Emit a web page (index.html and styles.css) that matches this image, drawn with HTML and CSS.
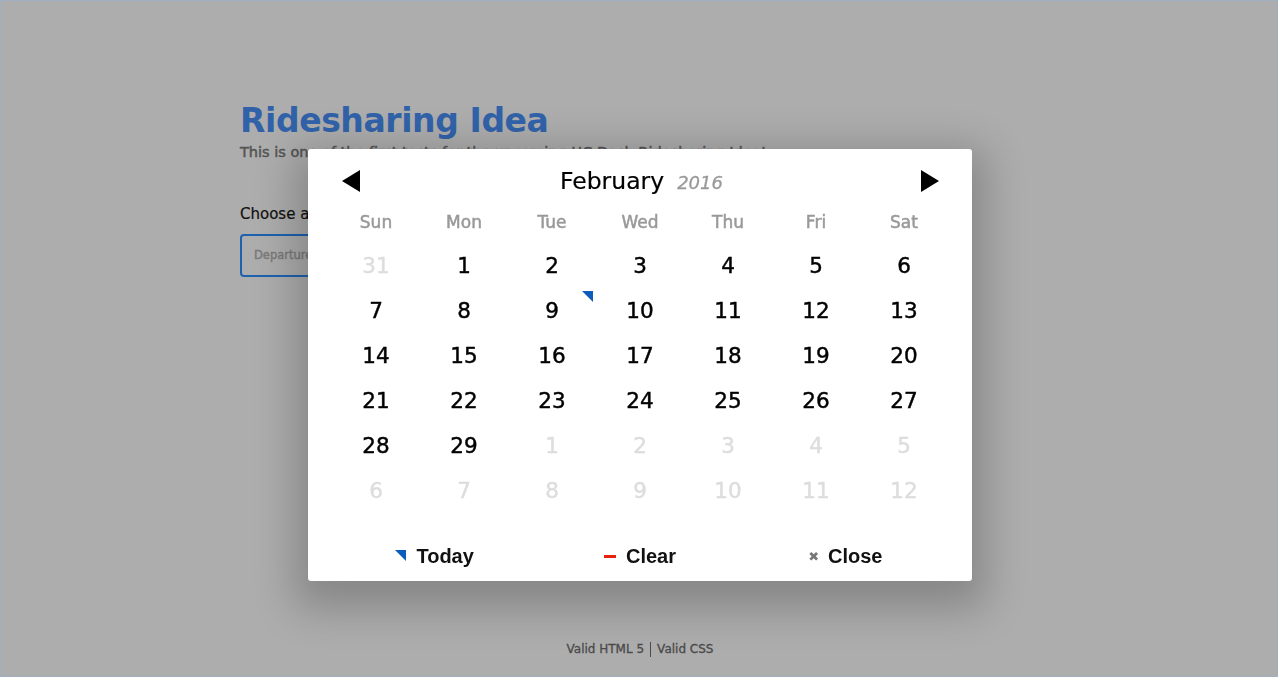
FILE: index.html
```html
<!DOCTYPE html>
<html lang="en">
<head>
<meta charset="utf-8">
<title>Ridesharing Idea</title>
<link rel="stylesheet" href="styles.css">
</head>
<body>
<div class="page">
  <main class="content">
    <h1 class="title">Ridesharing Idea</h1>
    <p class="lead">This is one of the first tests for the upcoming HC Dash Ridesharing Idea!</p>
    <label class="choose">Choose a date:</label>
    <div class="input">Departure date</div>
  </main>
  <footer class="site-foot">Valid HTML 5 <span class="sep"></span> Valid CSS</footer>
</div>

<div class="picker">
  <div class="picker-head">
    <span class="nav nav-prev"></span>
    <div class="month-year"><span class="month">February</span><span class="year">2016</span></div>
    <span class="nav nav-next"></span>
  </div>
  <div class="grid weekdays">
    <span>Sun</span><span>Mon</span><span>Tue</span><span>Wed</span><span>Thu</span><span>Fri</span><span>Sat</span>
  </div>
  <div class="grid days">
    <span class="out">31</span><span>1</span><span>2</span><span>3</span><span>4</span><span>5</span><span>6</span>
    <span>7</span><span>8</span><span class="today">9</span><span>10</span><span>11</span><span>12</span><span>13</span>
    <span>14</span><span>15</span><span>16</span><span>17</span><span>18</span><span>19</span><span>20</span>
    <span>21</span><span>22</span><span>23</span><span>24</span><span>25</span><span>26</span><span>27</span>
    <span>28</span><span>29</span><span class="out">1</span><span class="out">2</span><span class="out">3</span><span class="out">4</span><span class="out">5</span>
    <span class="out">6</span><span class="out">7</span><span class="out">8</span><span class="out">9</span><span class="out">10</span><span class="out">11</span><span class="out">12</span>
  </div>
  <div class="picker-foot">
    <button class="btn"><span class="mk mk-today"></span>Today</button>
    <button class="btn"><span class="mk mk-clear"></span>Clear</button>
    <button class="btn"><span class="mk mk-close">✖</span>Close</button>
  </div>
</div>
</body>
</html>
```
FILE: styles.css
```css
* { box-sizing: border-box; }
html, body { margin: 0; padding: 0; }
body {
  background: #adadad;
  font-family: "DejaVu Sans", Verdana, sans-serif;
}
.page {
  height: 677px;
  border: 1px solid #9eafc2;
  display: flex;
  flex-direction: column;
}
.content {
  width: 798px;
  margin: 0 auto;
  padding-top: 99px;
  flex: 1;
}
.title {
  margin: 0;
  font-size: 33px;
  line-height: 42px;
  font-weight: bold;
  color: #3162a9;
  letter-spacing: -0.4px;
}
.lead {
  margin: 0;
  font-size: 14.5px;
  line-height: 20px;
  color: #555;
  -webkit-text-stroke: 0.5px #555;
  white-space: nowrap;
}
.choose {
  display: block;
  margin-top: 42px;
  font-size: 15px;
  line-height: 20px;
  color: #111;
  -webkit-text-stroke: 0.2px #111;
}
.input {
  margin-top: 10px;
  width: 300px;
  height: 43px;
  border: 2px solid #1d62ae;
  border-radius: 4px;
  padding: 0 12px;
  font-size: 11.5px;
  line-height: 39px;
  color: #7a7a7a;
  -webkit-text-stroke: 0.4px #7a7a7a;
}
.site-foot {
  text-align: center;
  font-size: 12px;
  line-height: 16px;
  color: #4a4a4a;
  -webkit-text-stroke: 0.3px #4a4a4a;
  padding-bottom: 19px;
  display: flex;
  justify-content: center;
  align-items: center;
  gap: 6px;
  padding-left: 2px;
}
.sep {
  display: inline-block;
  width: 1px;
  height: 15px;
  background: #4a4a4a;
}

/* picker modal */
.picker {
  position: fixed;
  left: 308px;
  top: 149px;
  width: 664px;
  height: 432px;
  background: #fff;
  border-radius: 3px;
  box-shadow: 0 14px 40px 14px rgba(0,0,0,0.22);
  padding: 14px 24px 5px;
}
.picker-head {
  height: 36px;
  display: flex;
  align-items: center;
  justify-content: space-between;
  padding: 0 9px 0 10px;
}
.nav {
  width: 0;
  height: 0;
  border-top: 11.5px solid transparent;
  border-bottom: 11.5px solid transparent;
}
.nav-prev { border-right: 18px solid #000; }
.nav-next { border-left: 18px solid #000; }
.month-year {
  display: flex;
  align-items: baseline;
  gap: 13px;
  padding-left: 2px;
}
.month {
  font-size: 23.5px;
  color: #000;
  -webkit-text-stroke: 0.2px #000;
}
.year {
  font-size: 18px;
  font-style: italic;
  color: #999;
  -webkit-text-stroke: 0.3px #999;
}
.grid {
  display: grid;
  grid-template-columns: repeat(7, 88px);
  text-align: center;
}
.weekdays {
  margin-top: 8px;
  height: 30px;
  line-height: 30px;
  font-size: 17px;
  color: #999;
  -webkit-text-stroke: 0.5px #999;
}
.days {
  margin-top: 6px;
  grid-auto-rows: 45px;
  font-size: 21.5px;
  line-height: 45px;
  color: #000;
  -webkit-text-stroke: 0.45px #000;
}
.days span { position: relative; }
.days .out { color: #ddd; -webkit-text-stroke-color: #ddd; }
.days .today::before {
  content: "";
  position: absolute;
  top: 3px;
  right: 3px;
  border-top: 11px solid #0a5cbd;
  border-left: 11px solid transparent;
}
.picker-foot {
  margin-top: 23px;
  height: 40px;
  display: grid;
  grid-template-columns: repeat(3, 1fr);
}
.btn {
  border: 0;
  background: transparent;
  padding: 0;
  font-family: "Liberation Sans", Arial, sans-serif;
  font-weight: bold;
  font-size: 20px;
  color: #111;
  display: flex;
  align-items: center;
  justify-content: center;
  gap: 9px;
}
.mk { display: inline-block; }
.mk-today {
  width: 0;
  height: 0;
  border-top: 11px solid #0a5cbd;
  border-left: 11px solid transparent;
  margin-top: -2px;
  margin-right: 1px;
}
.mk-clear {
  width: 12px;
  height: 3px;
  background: #e8210c;
  margin-right: 1px;
}
.mk-close {
  font-size: 13px;
  color: #777;
  font-family: "DejaVu Sans", sans-serif;
}
```
